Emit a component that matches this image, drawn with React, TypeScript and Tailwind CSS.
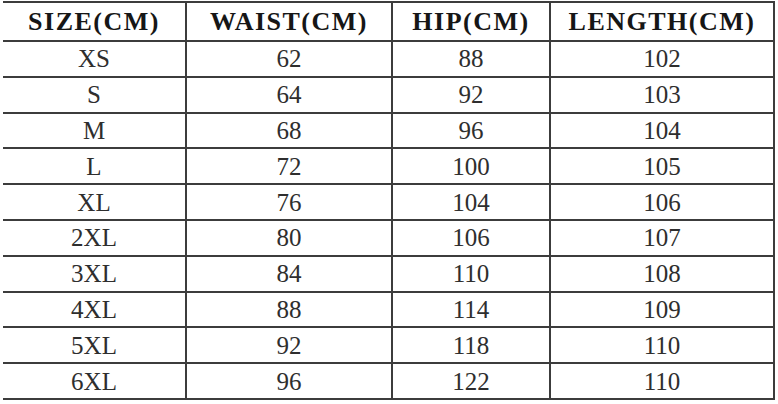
// Size chart table (CM)

const columns = [
  { label: 'SIZE(CM)', width: 'w-[184px]' },
  { label: 'WAIST(CM)', width: 'w-[206px]' },
  { label: 'HIP(CM)', width: 'w-[158px]' },
  { label: 'LENGTH(CM)', width: 'w-[224px]' },
];

const rows: string[][] = [
  ['XS', '62', '88', '102'],
  ['S', '64', '92', '103'],
  ['M', '68', '96', '104'],
  ['L', '72', '100', '105'],
  ['XL', '76', '104', '106'],
  ['2XL', '80', '106', '107'],
  ['3XL', '84', '110', '108'],
  ['4XL', '88', '114', '109'],
  ['5XL', '92', '118', '110'],
  ['6XL', '96', '122', '110'],
];

export default function App() {
  return (
    <div className="w-[778px] h-[404px] bg-white overflow-hidden font-['Liberation_Serif',serif]">
      <div className="ml-[3px] mt-[1px] w-[772px] border-t-2 border-[#3c3c3c]">
        {/* header */}
        <div className="flex h-[39px] border-b-2 border-[#3c3c3c]">
          {columns.map((col) => (
            <div
              key={col.label}
              className={`${col.width} flex items-center justify-center border-r-2 border-[#3c3c3c] text-[26px] font-bold tracking-[1.5px] text-[#161616] leading-none`}
            >
              {col.label}
            </div>
          ))}
        </div>
        {rows.map((row) => (
          <div key={row[0]} className="flex h-[35.8px] border-b-2 border-[#3c3c3c]">
            {row.map((cell, i) => (
              <div
                key={i}
                className={`${columns[i].width} flex items-center justify-center border-r-2 border-[#3c3c3c] text-[25px] text-[#2e2e2e] leading-none`}
              >
                {cell}
              </div>
            ))}
          </div>
        ))}
      </div>
    </div>
  );
}
